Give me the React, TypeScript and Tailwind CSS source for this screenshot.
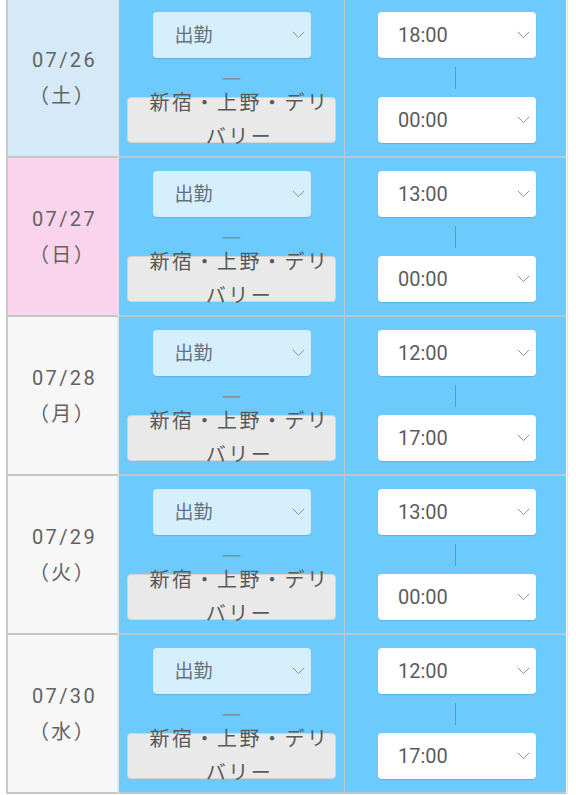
import React from 'react';

type Day = {
  date: string;
  week: string;
  kind: 'sat' | 'sun' | 'weekday';
  start: string;
  end: string;
};

const days: Day[] = [
  { date: '07/26', week: '（土）', kind: 'sat', start: '18:00', end: '00:00' },
  { date: '07/27', week: '（日）', kind: 'sun', start: '13:00', end: '00:00' },
  { date: '07/28', week: '（月）', kind: 'weekday', start: '12:00', end: '17:00' },
  { date: '07/29', week: '（火）', kind: 'weekday', start: '13:00', end: '00:00' },
  { date: '07/30', week: '（水）', kind: 'weekday', start: '12:00', end: '17:00' },
];

const dateBg = {
  sat: 'bg-[#d5e9f8]',
  sun: 'bg-[#fad4ec]',
  weekday: 'bg-[#f7f7f7]',
};

function Chevron() {
  return (
    <svg width="13" height="8" viewBox="0 0 13 8" className="shrink-0">
      <polyline points="0.8,0.8 6.5,6.6 12.2,0.8" fill="none" stroke="#929292" strokeWidth="1" />
    </svg>
  );
}

function SelectBox({ value, tone }: { value: string; tone: 'status' | 'time' }) {
  const isStatus = tone === 'status';
  return (
    <div
      className={`flex h-[46px] w-[158px] items-center justify-between rounded-[4px] pr-[6px] shadow-[0_1px_1px_rgba(0,0,0,0.12)] ${
        isStatus ? 'bg-[#d5effd] pl-[22px] text-[19px] text-[#65717c]' : 'bg-white pl-[20px] text-[20px] text-[#5c5c5c]'
      }`}
    >
      <span className="leading-none">{value}</span>
      <Chevron />
    </div>
  );
}

function Row({ day }: { day: Day }) {
  return (
    <>
      <div
        className={`flex flex-col items-center justify-center border-b-2 border-r-2 border-b-[#c6c6c6] border-r-[#dfe4e8] text-[20px] leading-[36px] tracking-[0.12em] text-[#626262] ${dateBg[day.kind]}`}
      >
        <span className="pl-[4px]">{day.date}</span>
        <span>{day.week}</span>
      </div>

      <div className="flex flex-col items-center border-b-2 border-r border-b-[#b9c7d0] border-r-[#b9c7d0] bg-[#6ccafd] pt-[13px] pb-[13px]">
        <SelectBox value="出勤" tone="status" />
        <div className="flex h-[39px] items-center justify-center pb-[5px] font-['Noto_Sans_CJK_JP'] text-[22px] leading-none text-[#7f8f9b]">—</div>
        <div className="flex h-[46px] w-[209px] items-center justify-center rounded-[4px] border border-[#d4d4d4] bg-[#e9e9e9] pl-[18px] pr-[2px] text-center text-[20px] leading-[34px] tracking-[2.5px] text-[#595959]">
          新宿・上野・デリバリー
        </div>
      </div>

      <div className="flex flex-col items-center border-b-2 border-b-[#b9c7d0] bg-[#6ccafd] pt-[13px] pb-[13px]">
        <div className="pl-[3px]">
          <SelectBox value={day.start} tone="time" />
        </div>
        <div className="flex h-[39px] items-center justify-center">
          <div className="h-[22px] w-px bg-[#7f8e99]" />
        </div>
        <div className="pl-[3px]">
          <SelectBox value={day.end} tone="time" />
        </div>
      </div>
    </>
  );
}

export default function App() {
  return (
    <div
      className="h-[795px] w-[576px] overflow-hidden bg-white"
      style={{ fontFamily: 'Roboto, "Noto Sans CJK JP", sans-serif' }}
    >
      <div className="-mt-px ml-[6px] w-[562px] border-l-2 border-r border-l-[#c9c9c9] border-r-[#e2e2e2]">
        <div className="grid grid-cols-[111px_226px_221px]">
          {days.map((d) => (
            <Row key={d.date} day={d} />
          ))}
        </div>
      </div>
    </div>
  );
}
